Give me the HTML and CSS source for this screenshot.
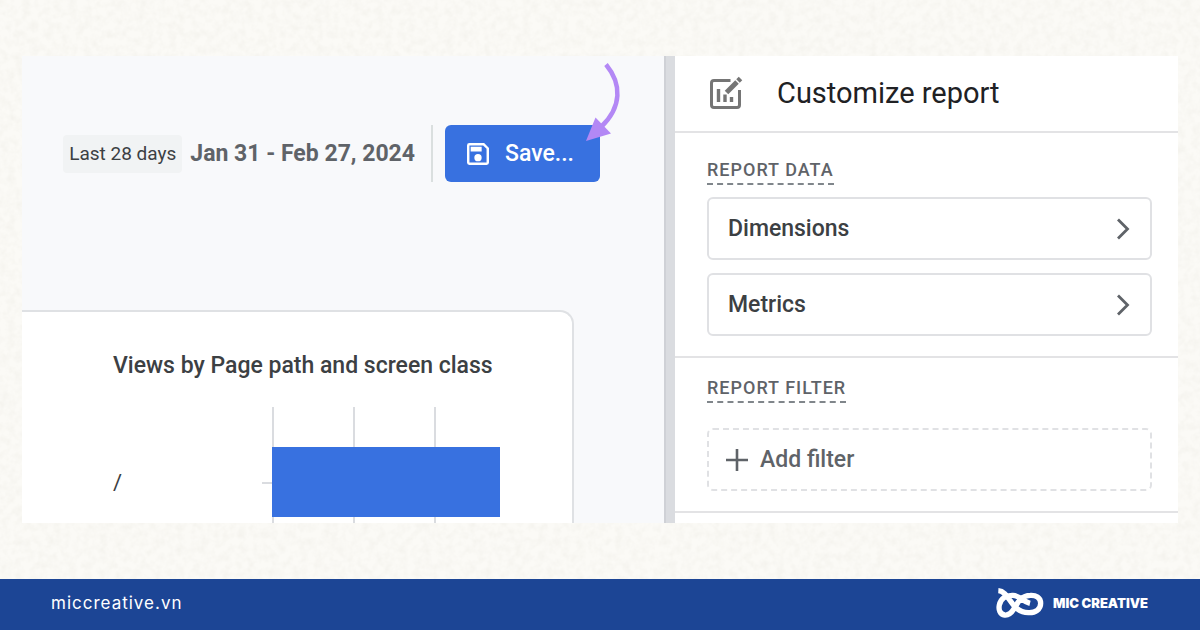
FILE: index.html
```html
<!DOCTYPE html>
<html lang="en">
<head>
<meta charset="utf-8">
<meta name="viewport" content="width=device-width, initial-scale=1">
<title>Customize report</title>
<link rel="stylesheet" href="styles.css">
</head>
<body>
<svg class="paper" aria-hidden="true">
  <filter id="grain" x="0" y="0" width="100%" height="100%">
    <feTurbulence type="fractalNoise" baseFrequency="0.13" numOctaves="3" seed="4"/>
    <feColorMatrix values="0 0 0 0 0.6  0 0 0 0 0.58  0 0 0 0 0.5  0.25 0 0 0 -0.09"/>
  </filter>
  <rect width="100%" height="100%" filter="url(#grain)"/>
</svg>
<main class="stage">
  <div class="shot">
    <section class="report">
      <div class="toolbar">
        <span class="chip">Last 28 days</span>
        <span class="dates">Jan 31 - Feb 27, 2024</span>
        <span class="rule"></span>
        <div class="save-wrap">
          <button class="save" type="button">
            <svg class="save-icon" viewBox="3 3 18 18" fill="currentColor" aria-hidden="true"><path d="M17 3H5a2 2 0 0 0-2 2v14a2 2 0 0 0 2 2h14a2 2 0 0 0 2-2V7l-4-4zm2 16H5V5h11.2L19 7.8V19zm-7-7a3 3 0 1 0 0 6 3 3 0 0 0 0-6zM6 6h9v4H6z"/></svg>
            Save...
          </button>
          <svg class="arrow" viewBox="580 60 45 85" aria-hidden="true">
            <path d="M606 64.500C622 84 622 107 601 127" fill="none" stroke="#b388f5" stroke-width="4.500"/>
            <path d="M586 141L595.500 117.500L611 133.500Z" fill="#b388f5"/>
          </svg>
        </div>
      </div>
      <div class="card">
        <h2 class="card-title">Views by Page path and screen class</h2>
        <div class="chart">
          <span class="row-label">/</span>
          <span class="tick"></span>
          <div class="plot"><div class="bar"></div></div>
        </div>
      </div>
    </section>
    <div class="divider"></div>
    <aside class="panel">
      <header class="panel-head">
        <svg class="edit-icon" viewBox="0 0 34 34" fill="none" stroke="#757575" aria-hidden="true">
          <path d="M21.500 4.500H5Q2.500 4.500 2.500 7V29Q2.500 31.500 5 31.500H28Q30.500 31.500 30.500 29V14" stroke-width="3"/>
          <path d="M9.500 13V26M16 18.500V26M22.500 21V26" stroke-width="3.400"/>
          <path d="M17.500 16.500L28 6" stroke-width="5"/>
          <path d="M29 5L31.500 2.500" stroke-width="5"/>
        </svg>
        <h1 class="panel-title">Customize report</h1>
      </header>
      <section class="group">
        <h3 class="label">REPORT DATA</h3>
        <div class="options">
          <button class="option" type="button">Dimensions
            <svg class="chevron" viewBox="0 0 14 22" aria-hidden="true"><path d="M2 1.500L11.500 11L2 20.500" fill="none" stroke="#5f6368" stroke-width="2.800"/></svg>
          </button>
          <button class="option" type="button">Metrics
            <svg class="chevron" viewBox="0 0 14 22" aria-hidden="true"><path d="M2 1.500L11.500 11L2 20.500" fill="none" stroke="#5f6368" stroke-width="2.800"/></svg>
          </button>
        </div>
      </section>
      <section class="group group-filter">
        <h3 class="label">REPORT FILTER</h3>
        <button class="add" type="button">
          <svg class="plus" viewBox="0 0 22 22" aria-hidden="true"><path d="M11 0V22M0 11H22" stroke="#5f6368" stroke-width="2.600"/></svg>
          Add filter
        </button>
      </section>
    </aside>
  </div>
</main>
<footer class="footer">
  <a class="site" href="#">miccreative.vn</a>
  <div class="brand">
    <svg class="logo" viewBox="40 52 144 90" fill="none" stroke="#fff" stroke-width="16" aria-hidden="true">
      <path d="M47 60C82 62 82 124 137 126C159 127 174 116 174 98C174 80 159 73 143 74C111 75 105 98 93 116C84 130 75 134 66 133C52 131 47 117 50 103C54 84 69 73 91 74C111 75 121 93 142 98"/>
    </svg>
    <span class="brand-name">MIC CREATIVE</span>
  </div>
</footer>
</body>
</html>
```

FILE: styles.css
```css
* { box-sizing: border-box; }
body {
  margin: 0;
  min-height: 100vh;
  display: flex;
  flex-direction: column;
  background: #fbfaf6;
  font-family: Roboto, "Liberation Sans", sans-serif;
  color: #3c4043;
}
h1, h2, h3 { margin: 0; font-weight: 500; }
button { font: inherit; color: inherit; margin: 0; }

.paper { position: absolute; inset: 0; width: 100%; height: 100%; z-index: -1; }
.stage { flex: 1; display: flex; padding: 56px 22px; }
.shot {
  flex: 1;
  display: grid;
  grid-template-columns: minmax(0, 642fr) 11px minmax(0, 503fr);
  background: #fff;
}

.report { display: flex; flex-direction: column; background: #f8f9fb; }
.toolbar {
  display: flex;
  align-items: center;
  justify-content: flex-end;
  padding: 69px 64px 0 0;
  white-space: nowrap;
}
.chip {
  padding: 7px 6px;
  border-radius: 4px;
  background: #f1f3f4;
  font-size: 19px;
  line-height: 24px;
}
.dates { margin: 0 16px 0 8px; font-size: 23px; font-weight: 700; color: #5f6368; }
.rule { width: 2px; height: 57px; background: #dadfdf; }
.save-wrap { position: relative; margin-left: 12px; }
.save {
  display: flex;
  align-items: center;
  gap: 16px;
  width: 155px;
  height: 57px;
  padding: 0 22px;
  border: 0;
  border-radius: 6px;
  background: #3871e0;
  color: #fff;
  font-size: 23px;
  font-weight: 500;
}
.save-icon { width: 22px; height: 22px; }
.arrow { position: absolute; top: -65px; right: -25px; width: 45px; height: 85px; }

.card {
  flex: 1;
  margin: 128px 90px 0 0;
  padding: 40px 0 0 91px;
  border: 2px solid #dfe1e4;
  border-width: 2px 2px 0 0;
  border-radius: 0 14px 0 0;
  background: #fff;
}
.card-title { font-size: 23px; line-height: 28px; white-space: nowrap; }
.chart { display: grid; grid-template-columns: 149px 10px 1fr; align-items: start; margin-top: 27px; }
.row-label { margin-top: 62px; font-size: 22px; line-height: 28px; }
.tick { height: 2px; margin-top: 75px; background: #dadce0; }
.plot {
  height: 116px;
  padding-top: 40px;
  background:
    linear-gradient(#dadce0, #dadce0) 0 0 / 2px 100% no-repeat,
    linear-gradient(#dadce0, #dadce0) 81px 0 / 2px 100% no-repeat,
    linear-gradient(#dadce0, #dadce0) 162px 0 / 2px 100% no-repeat;
}
.bar { width: 228px; height: 70px; background: #3871e0; }

.divider { background: #dadce0; border-left: 2px solid #cfd1d6; }

.panel-head {
  display: flex;
  align-items: center;
  gap: 34px;
  height: 77px;
  padding: 0 34px 2px;
  border-bottom: 2px solid #e3e3e5;
}
.edit-icon { width: 34px; height: 34px; }
.panel-title { font-size: 29px; font-weight: 400; color: #202124; white-space: nowrap; }
.group { padding: 26px 26px 20px 32px; border-bottom: 2px solid #e3e3e5; }
.label {
  width: max-content;
  padding-bottom: 2px;
  border-bottom: 2px dashed #80868b;
  font-size: 18px;
  line-height: 22px;
  letter-spacing: 1px;
  color: #5f6368;
}
.options { display: grid; gap: 13px; margin-top: 12px; }
.option, .add {
  display: flex;
  align-items: center;
  width: 100%;
  height: 63px;
  border: 2px solid #e0e1e4;
  border-radius: 6px;
  background: #fff;
  font-size: 23px;
  font-weight: 500;
}
.option { justify-content: space-between; padding: 0 20px 0 19px; }
.chevron { width: 14px; height: 22px; }
.group-filter { padding-top: 19px; }
.add { gap: 12px; margin-top: 25px; padding: 0 17px; border-style: dashed; color: #5f6368; }
.plus { width: 22px; height: 22px; }

.footer {
  display: flex;
  align-items: center;
  justify-content: space-between;
  height: 51px;
  padding: 0 52px 4px 51px;
  background: #1c4595;
  color: #fff;
}
.site { color: inherit; text-decoration: none; font-family: Inter, sans-serif; font-size: 17px; letter-spacing: 1px; }
.brand { display: flex; align-items: center; gap: 9px; }
.logo { width: 48px; height: 30px; }
.brand-name { font-family: Inter, sans-serif; font-size: 13px; font-weight: 900; white-space: nowrap; }
```
